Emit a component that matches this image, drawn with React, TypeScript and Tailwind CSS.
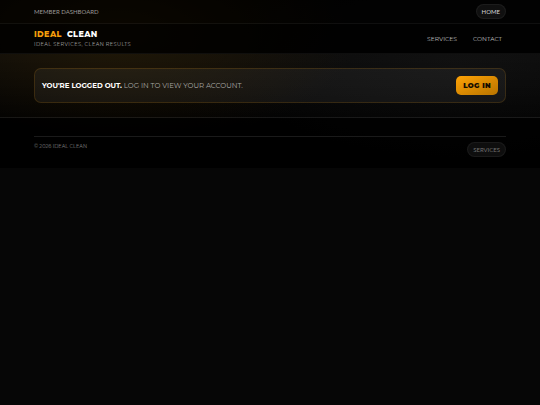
const navLinks = [
  { label: "Services", href: "#services" },
  { label: "Contact", href: "#contact" },
];

export default function App() {
  return (
    <div className="min-h-screen bg-[#060606] font-[Montserrat,Inter,sans-serif] uppercase text-white">
      <div className="bg-[#020202] bg-[radial-gradient(ellipse_240px_110px_at_22%_20%,#1c1200_0%,transparent_100%),radial-gradient(ellipse_300px_120px_at_85%_40%,#0a0a0a_0%,transparent_100%)]">
        {/* Top bar */}
        <div className="border-b border-white/5 bg-black/60 px-[34px]">
          <div className="flex h-[23px] items-center justify-between font-[Lato,sans-serif]">
            <p className="text-[6px] leading-none text-[#9b9995]">Member dashboard</p>
            <a
              href="#home"
              className="flex h-[15px] items-center rounded-full border border-white/5 bg-[#101010] px-[5px] text-[6px] leading-none text-[#d4d4d4]"
            >
              Home
            </a>
          </div>
        </div>

        {/* Header */}
        <header className="border-b border-white/5 bg-black/80 px-[34px]">
          <div className="flex h-[29px] items-center justify-between">
            <a href="#top" className="block">
              <span className="flex gap-[5px] text-[8px] font-extrabold leading-[10px] tracking-wider">
                <span className="text-[#f59e0b]">Ideal</span>
                <span>Clean</span>
              </span>
              <span className="block text-[5px] leading-[10px] tracking-[0.08em] text-[#a8a8a8]">
                Ideal services, clean results
              </span>
            </a>
            <nav className="flex gap-4 pr-1">
              {navLinks.map((link) => (
                <a
                  key={link.label}
                  href={link.href}
                  className="text-[6px] leading-none text-[#c4c4c4]"
                >
                  {link.label}
                </a>
              ))}
            </nav>
          </div>
        </header>

        {/* Account status */}
        <main className="border-b border-white/5 bg-linear-to-b from-white/[0.03] to-transparent px-[34px] py-[14px]">
          <div className="flex h-[35px] items-center justify-between rounded-[7px] border border-[#f59e0b]/15 bg-white/[0.05] px-[7px]">
            <p className="text-[7px] leading-none text-[#a8a7a4]">
              <strong className="font-bold text-white">You're logged out.</strong>{" "}
              Log in to view your account.
            </p>
            <button
              type="button"
              className="h-[19px] rounded-[5px] bg-linear-to-br from-[#ffa306] to-[#b87400] px-[7px] text-[7px] font-black uppercase leading-none tracking-wider text-[#140d00]"
            >
              Log in
            </button>
          </div>
        </main>

        {/* Footer */}
        <footer className="bg-black/80 px-[34px] pb-[11px] pt-[18px]">
          <div className="flex items-start justify-between border-t border-white/10 pt-[5px]">
            <p className="text-[5px] leading-[8px] text-[#808080]">© 2026 Ideal Clean</p>
            <a
              href="#services"
              className="flex h-[15px] items-center rounded-full border border-white/5 bg-[#0e0e0e] px-[5px] font-[Lato,sans-serif] text-[6px] leading-none text-[#707070]"
            >
              Services
            </a>
          </div>
        </footer>
      </div>
    </div>
  );
}
